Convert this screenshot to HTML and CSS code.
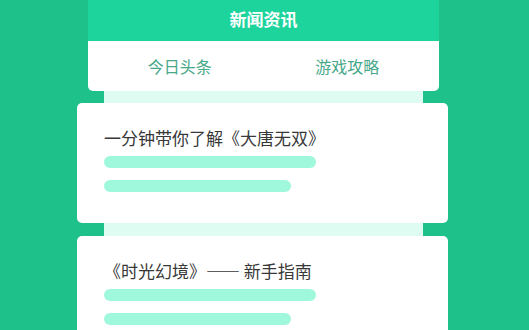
FILE: index.html
```html
<!DOCTYPE html>
<html lang="zh-CN">
<head>
<meta charset="utf-8">
<title>新闻资讯</title>
<link rel="stylesheet" href="styles.css">
</head>
<body>
<div class="page">
  <div class="header">新闻资讯</div>
  <div class="tabs">
    <div class="tab">今日头条</div>
    <div class="tab">游戏攻略</div>
  </div>
  <div class="list">
    <div class="card">
      <div class="title">一分钟带你了解《大唐无双》</div>
      <div class="bar bar-long"></div>
      <div class="bar bar-short"></div>
    </div>
    <div class="card">
      <div class="title">《时光幻境》—— 新手指南</div>
      <div class="bar bar-long"></div>
      <div class="bar bar-short"></div>
    </div>
  </div>
</div>
</body>
</html>
```
FILE: styles.css
```css
html, body {
  margin: 0;
  padding: 0;
}
body {
  background: #1fc18a;
  font-family: "Noto Sans CJK SC", "Noto Sans", sans-serif;
  height: 330px;
  overflow: hidden;
}
.page {
  width: 371px;
  margin-left: 77px;
}
.header {
  margin: 0 9px 0 11px;
  height: 41px;
  background: #1dd49c;
  color: #ffffff;
  font-size: 17px;
  font-weight: bold;
  line-height: 38px;
  text-align: center;
}
.tabs {
  margin: 0 9px 0 11px;
  height: 50px;
  background: #ffffff;
  border-radius: 0 0 5px 5px;
  display: grid;
  grid-template-columns: 1fr 1fr;
  padding: 0 8px;
  box-sizing: border-box;
}
.tab {
  text-align: center;
  font-size: 16px;
  line-height: 50px;
  color: #47a88a;
}
.list {
  margin: 0 25px 0 27px;
  background: #defcf1;
  padding-top: 12px;
  display: flex;
  flex-direction: column;
  gap: 13px;
}
.card {
  margin: 0 -25px 0 -27px;
  background: #ffffff;
  border-radius: 5px;
  padding: 23px 27px 31px;
  height: 120px;
  box-sizing: border-box;
}
.title {
  font-size: 17px;
  line-height: 24px;
  color: #383838;
}
.bar {
  height: 12px;
  border-radius: 6px;
  background: #a0f8dc;
}
.bar-long {
  width: 212px;
  margin-top: 6px;
}
.bar-short {
  width: 187px;
  margin-top: 12px;
}
```
